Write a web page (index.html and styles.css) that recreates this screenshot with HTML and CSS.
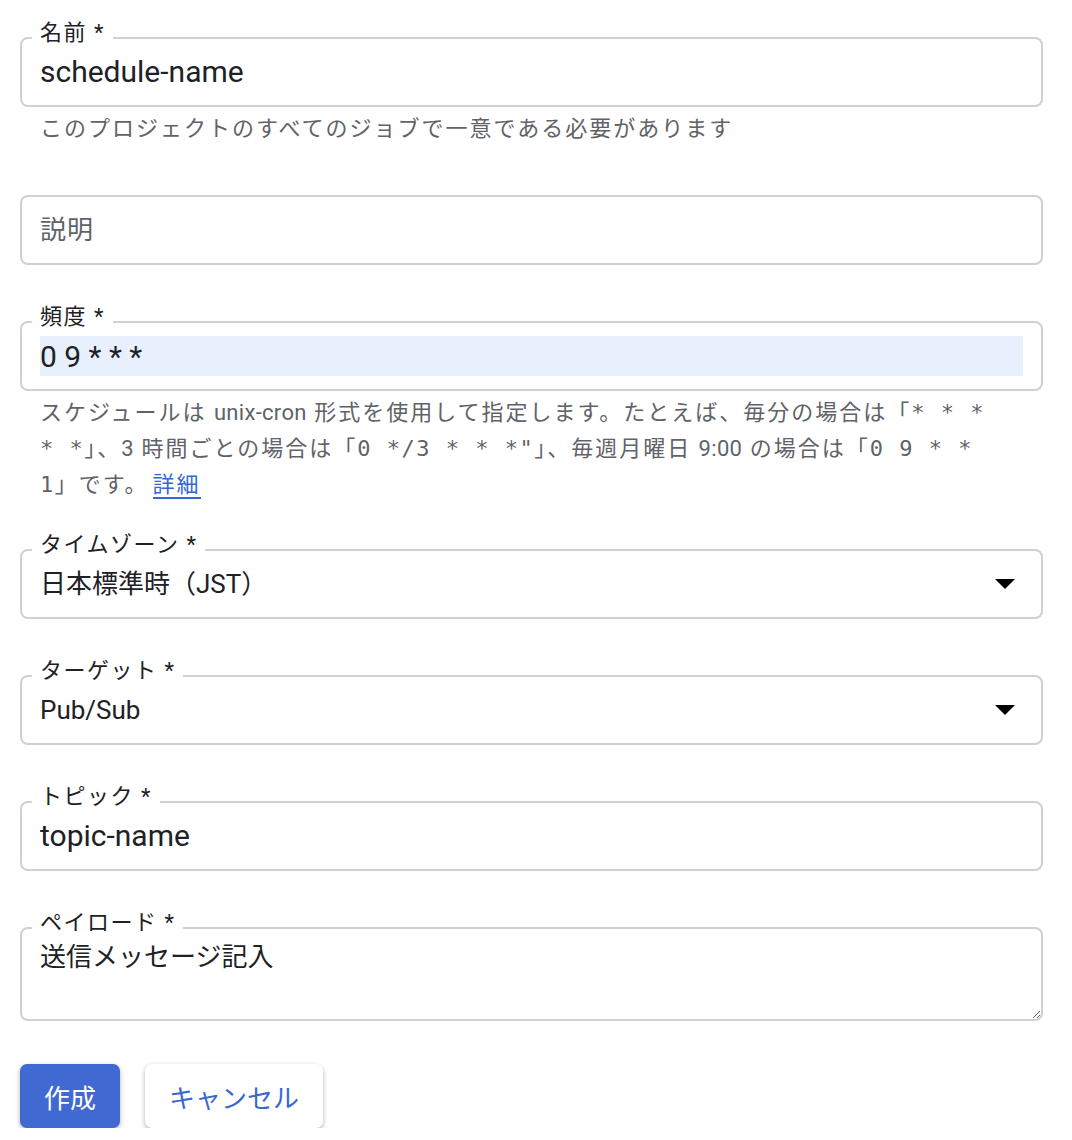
FILE: index.html
```html
<!DOCTYPE html>
<html lang="ja">
<head>
    <meta charset="UTF-8">
    <title>スケジュールの作成</title>
    <link rel="stylesheet" href="styles.css">
</head>
<body>
    <form class="form">
        <!-- 名前 -->
        <div class="group">
            <div class="field">
                <label class="label" for="name">名前 *</label>
                <input class="input latin" type="text" id="name" value="schedule-name">
            </div>
            <div class="hint">このプロジェクトのすべてのジョブで一意である必要があります</div>
        </div>

        <!-- 説明 -->
        <div class="group">
            <div class="field">
                <input class="input" type="text" id="description" placeholder="説明">
            </div>
        </div>

        <!-- 頻度 -->
        <div class="group">
            <div class="field">
                <label class="label" for="frequency">頻度 *</label>
                <input class="input latin filled" type="text" id="frequency" value="0 9 * * *">
            </div>
            <div class="hint hint-long">スケジュールは <span class="en">unix-cron</span> 形式を使用して指定します。たとえば、毎分の場合は「<code>* * *<br>* *</code>」、<span class="en">3</span> 時間ごとの場合は「<code>0 */3 * * *"</code>」、毎週月曜日 <span class="en">9:00</span> の場合は「<code>0 9 * *<br>1</code>」です。<a href="#" class="link">詳細</a></div>
        </div>

        <!-- タイムゾーン -->
        <div class="group">
            <div class="field">
                <label class="label" for="timezone">タイムゾーン *</label>
                <select class="input select" id="timezone">
                    <option>日本標準時（JST）</option>
                </select>
                <svg class="arrow" width="20" height="10" viewBox="0 0 20 10"><polygon points="0,0 20,0 10,10" fill="#000"/></svg>
            </div>
        </div>

        <!-- ターゲット -->
        <div class="group">
            <div class="field">
                <label class="label" for="target">ターゲット *</label>
                <select class="input select" id="target">
                    <option>Pub/Sub</option>
                </select>
                <svg class="arrow" width="20" height="10" viewBox="0 0 20 10"><polygon points="0,0 20,0 10,10" fill="#000"/></svg>
            </div>
        </div>

        <!-- トピック -->
        <div class="group">
            <div class="field">
                <label class="label" for="topic">トピック *</label>
                <input class="input latin" type="text" id="topic" value="topic-name">
            </div>
        </div>

        <!-- ペイロード -->
        <div class="group group-last">
            <div class="field field-area">
                <label class="label" for="payload">ペイロード *</label>
                <textarea class="input textarea" id="payload">送信メッセージ記入</textarea>
            </div>
        </div>

        <div class="actions">
            <button type="button" class="btn btn-primary">作成</button>
            <button type="button" class="btn btn-secondary">キャンセル</button>
        </div>
    </form>
</body>
</html>
```

FILE: styles.css
```css
body {
    margin: 0;
    padding: 0;
    background-color: #fff;
    font-family: Roboto, "Noto Sans CJK JP", sans-serif;
    color: #202124;
}

.form {
    width: 1023px;
    margin-left: 20px;
    padding-top: 37px;
}

.group {
    margin-bottom: 56px;
}

.group-last {
    margin-bottom: 43px;
}

.field {
    position: relative;
    display: flex;
    align-items: center;
    height: 70px;
    box-sizing: border-box;
    padding: 0 18px;
    border: 2px solid #d0d0d0;
    border-radius: 8px;
}

.label {
    position: absolute;
    top: -18px;
    left: 10px;
    padding: 0 8px;
    background-color: #fff;
    font-size: 22px;
    line-height: 24px;
    letter-spacing: 1.5px;
    color: #202124;
}

.input {
    flex: 1;
    min-width: 0;
    border: none;
    outline: none;
    padding: 0;
    margin: 0;
    background: transparent;
    font-family: Roboto, "Noto Sans CJK JP", sans-serif;
    font-size: 26px;
    line-height: 32px;
    color: #202124;
}

.input::placeholder {
    color: #5f6368;
    letter-spacing: 1px;
}

.latin {
    font-size: 30px;
}

.filled {
    height: 40px;
    background-color: #e8f0fe;
}

.select {
    appearance: none;
    -webkit-appearance: none;
    height: 40px;
}

.arrow {
    flex: none;
    margin-left: 10px;
    margin-right: 8px;
}

.field-area {
    height: 94px;
    align-items: stretch;
    padding: 12px 0 0 18px;
}

.textarea {
    resize: vertical;
    height: auto;
}

.hint {
    margin-top: 4px;
    margin-bottom: -8px;
    padding: 0 20px;
    font-size: 22px;
    line-height: 36px;
    letter-spacing: 2px;
    color: #5f6368;
    white-space: nowrap;
}

.hint-long {
    margin-bottom: -10px;
}

.hint .en {
    letter-spacing: 0.3px;
}

.hint code {
    font-family: "DejaVu Sans Mono", monospace;
    font-size: 22px;
    letter-spacing: 1.5px;
}

.link {
    margin-left: 4px;
    color: #3367d6;
    text-decoration: none;
    border-bottom: 2px solid #3367d6;
}

.actions {
    display: flex;
    gap: 25px;
}

.btn {
    height: 64px;
    padding: 0 24px;
    border: none;
    border-radius: 7px;
    font-family: Roboto, "Noto Sans CJK JP", sans-serif;
    font-size: 26px;
    cursor: pointer;
    box-shadow: 0 2px 5px rgba(0, 0, 0, 0.3);
}

.btn-primary {
    background-color: #4169d2;
    color: #fff;
}

.btn-secondary {
    background-color: #fff;
    color: #3b66d0;
}
```
